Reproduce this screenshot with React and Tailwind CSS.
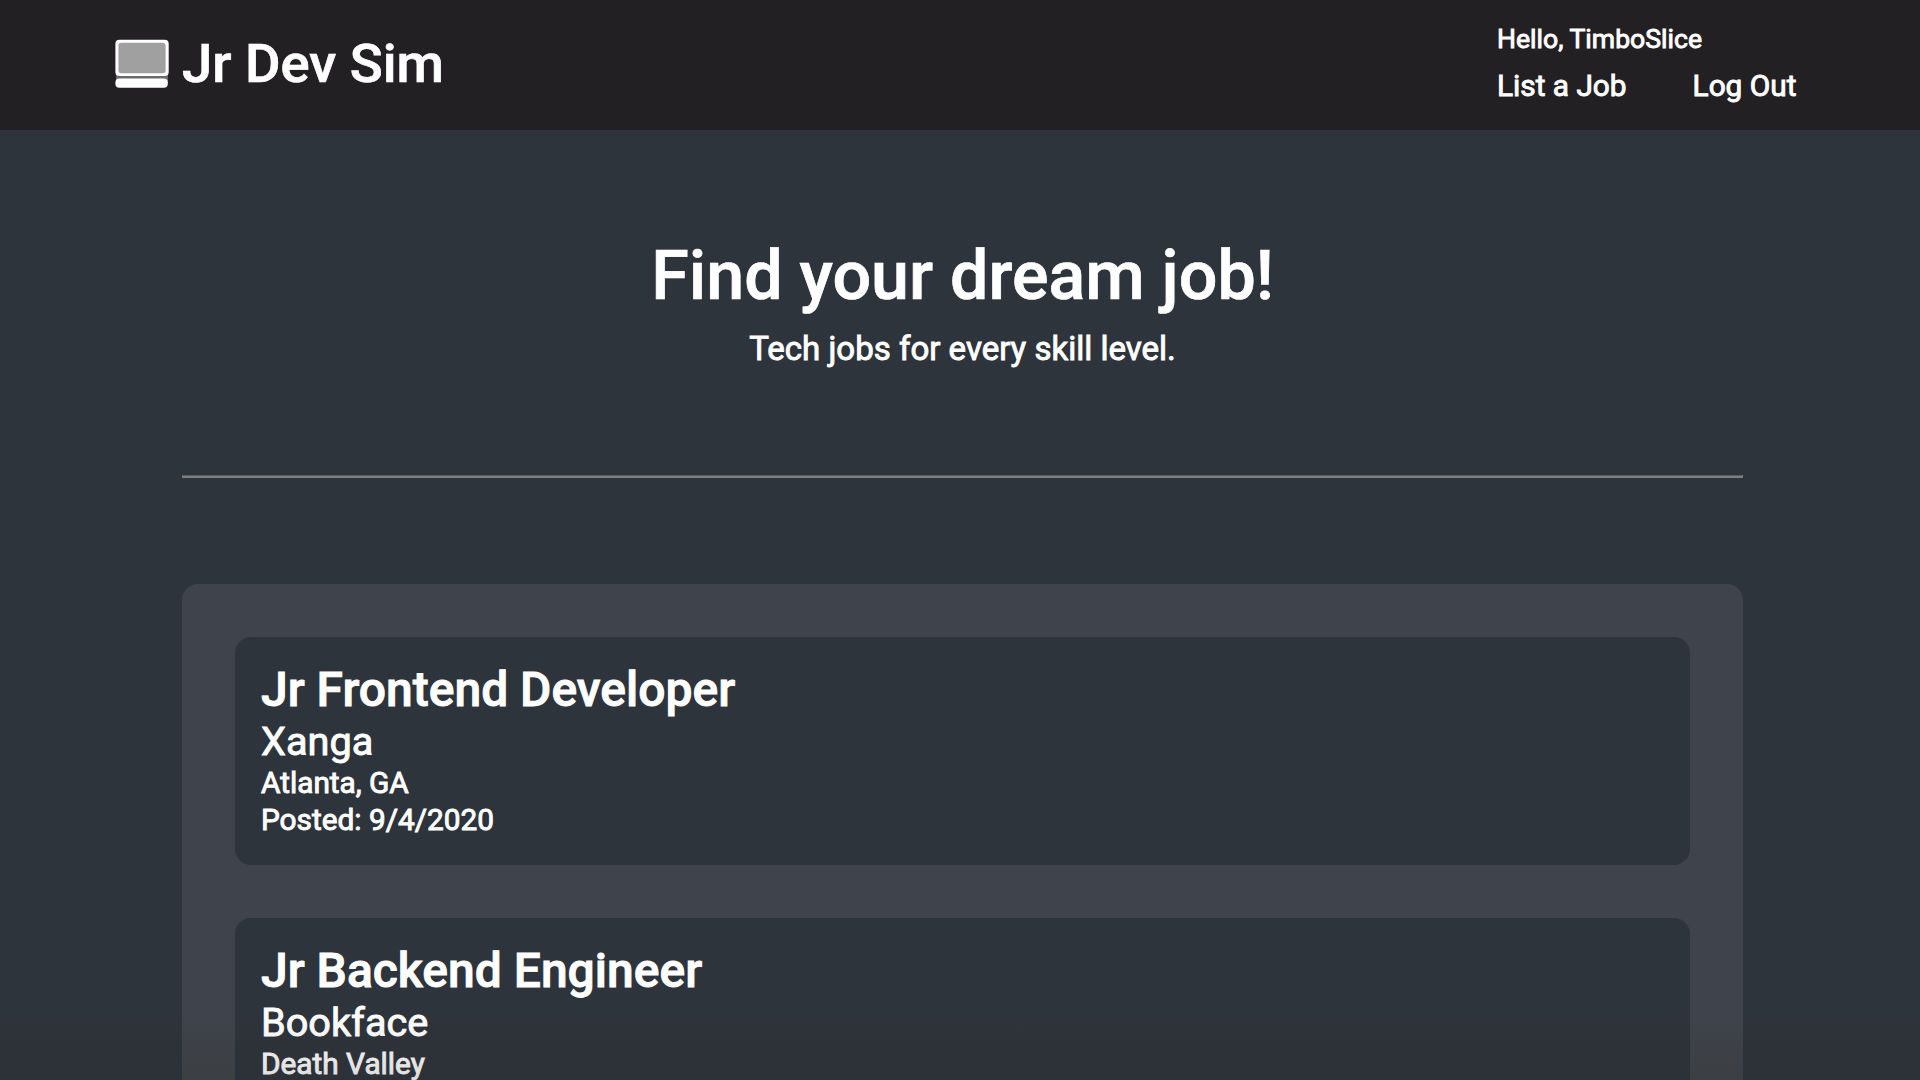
const jobs = [
  { title: "Jr Frontend Developer", company: "Xanga", place: "Atlanta, GA", posted: "Posted: 9/4/2020" },
  { title: "Jr Backend Engineer", company: "Bookface", place: "Death Valley" },
];

function LaptopIcon() {
  return (
    <svg width="54" height="50" viewBox="0 0 54 50" aria-hidden="true">
      <rect x="1" y="34" width="52" height="8" fill="#6b6a6c" />
      <rect x="0.4" y="0.7" width="53.3" height="36.2" rx="4" fill="#fff" />
      <rect x="3.4" y="3.8" width="47.2" height="30.4" rx="3" fill="#a0a0a0" />
      <rect x="0.4" y="39.5" width="52.4" height="9.2" rx="4" fill="#fff" />
    </svg>
  );
}

function JobCard({ job }) {
  return (
    <article className="h-[228px] shrink-0 rounded-2xl bg-[#2e343b] px-[26px] pt-[26px]">
      <h2 className="text-[48px] leading-[54px] font-medium [-webkit-text-stroke:0.9px_white]">{job.title}</h2>
      <p className="text-[39.7px] leading-[50px]">{job.company}</p>
      <p className="-mt-0.5 text-[29.8px] leading-[35px]">{job.place}</p>
      {job.posted && <p className="mt-px text-[29.8px] leading-[37px]">{job.posted}</p>}
    </article>
  );
}

export default function App() {
  return (
    <div className="relative flex h-[1080px] w-[1920px] flex-col overflow-hidden bg-[#2e343b] font-[Roboto,sans-serif] text-white [-webkit-text-stroke:0.9px_white]">
      <header className="flex h-[130px] shrink-0 justify-between bg-[#232023] pr-[124px] pl-[115px]">
        <div className="flex items-start gap-[13px]">
          <div className="pt-[39px]">
            <LaptopIcon />
          </div>
          <span className="pt-[32px] text-[54.4px] leading-[64px] font-medium [-webkit-text-stroke:0.7px_white]">Jr Dev Sim</span>
        </div>
        <nav className="w-[300px] shrink-0 pt-[23px] pl-px whitespace-nowrap">
          <p className="text-[26.6px] leading-[31px]">Hello, TimboSlice</p>
          <div className="mt-[14px] flex gap-[66px] text-[29.8px] leading-[35px]">
            <a>List a Job</a>
            <a>Log Out</a>
          </div>
        </nav>
      </header>

      <main className="ml-[182px] flex w-[1561px] grow flex-col">
        <section className="flex h-[345px] shrink-0 flex-col items-center pt-[106px] whitespace-nowrap">
          <h1 className="text-[68.2px] leading-[80px] font-medium [-webkit-text-stroke:0.7px_white]">Find your dream job!</h1>
          <p className="mt-[13px] text-[33px] leading-[39px]">Tech jobs for every skill level.</p>
        </section>
        <div className="h-[3px] shrink-0 border-t border-r-2 border-t-[#5c5c5c] border-r-[#808080] bg-[#7e7e7e]" />
        <section className="mt-[106px] flex h-[496px] shrink-0 flex-col gap-[53px] rounded-t-2xl bg-linear-to-b from-[#3f434b] from-88% to-[#3f4548] px-[53px] pt-[53px]">
          {jobs.map((job) => (
            <JobCard key={job.title} job={job} />
          ))}
        </section>
      </main>
      <div className="pointer-events-none absolute inset-x-0 bottom-0 h-[64px] bg-linear-to-b from-transparent to-[#261e22]/15" />
    </div>
  );
}
